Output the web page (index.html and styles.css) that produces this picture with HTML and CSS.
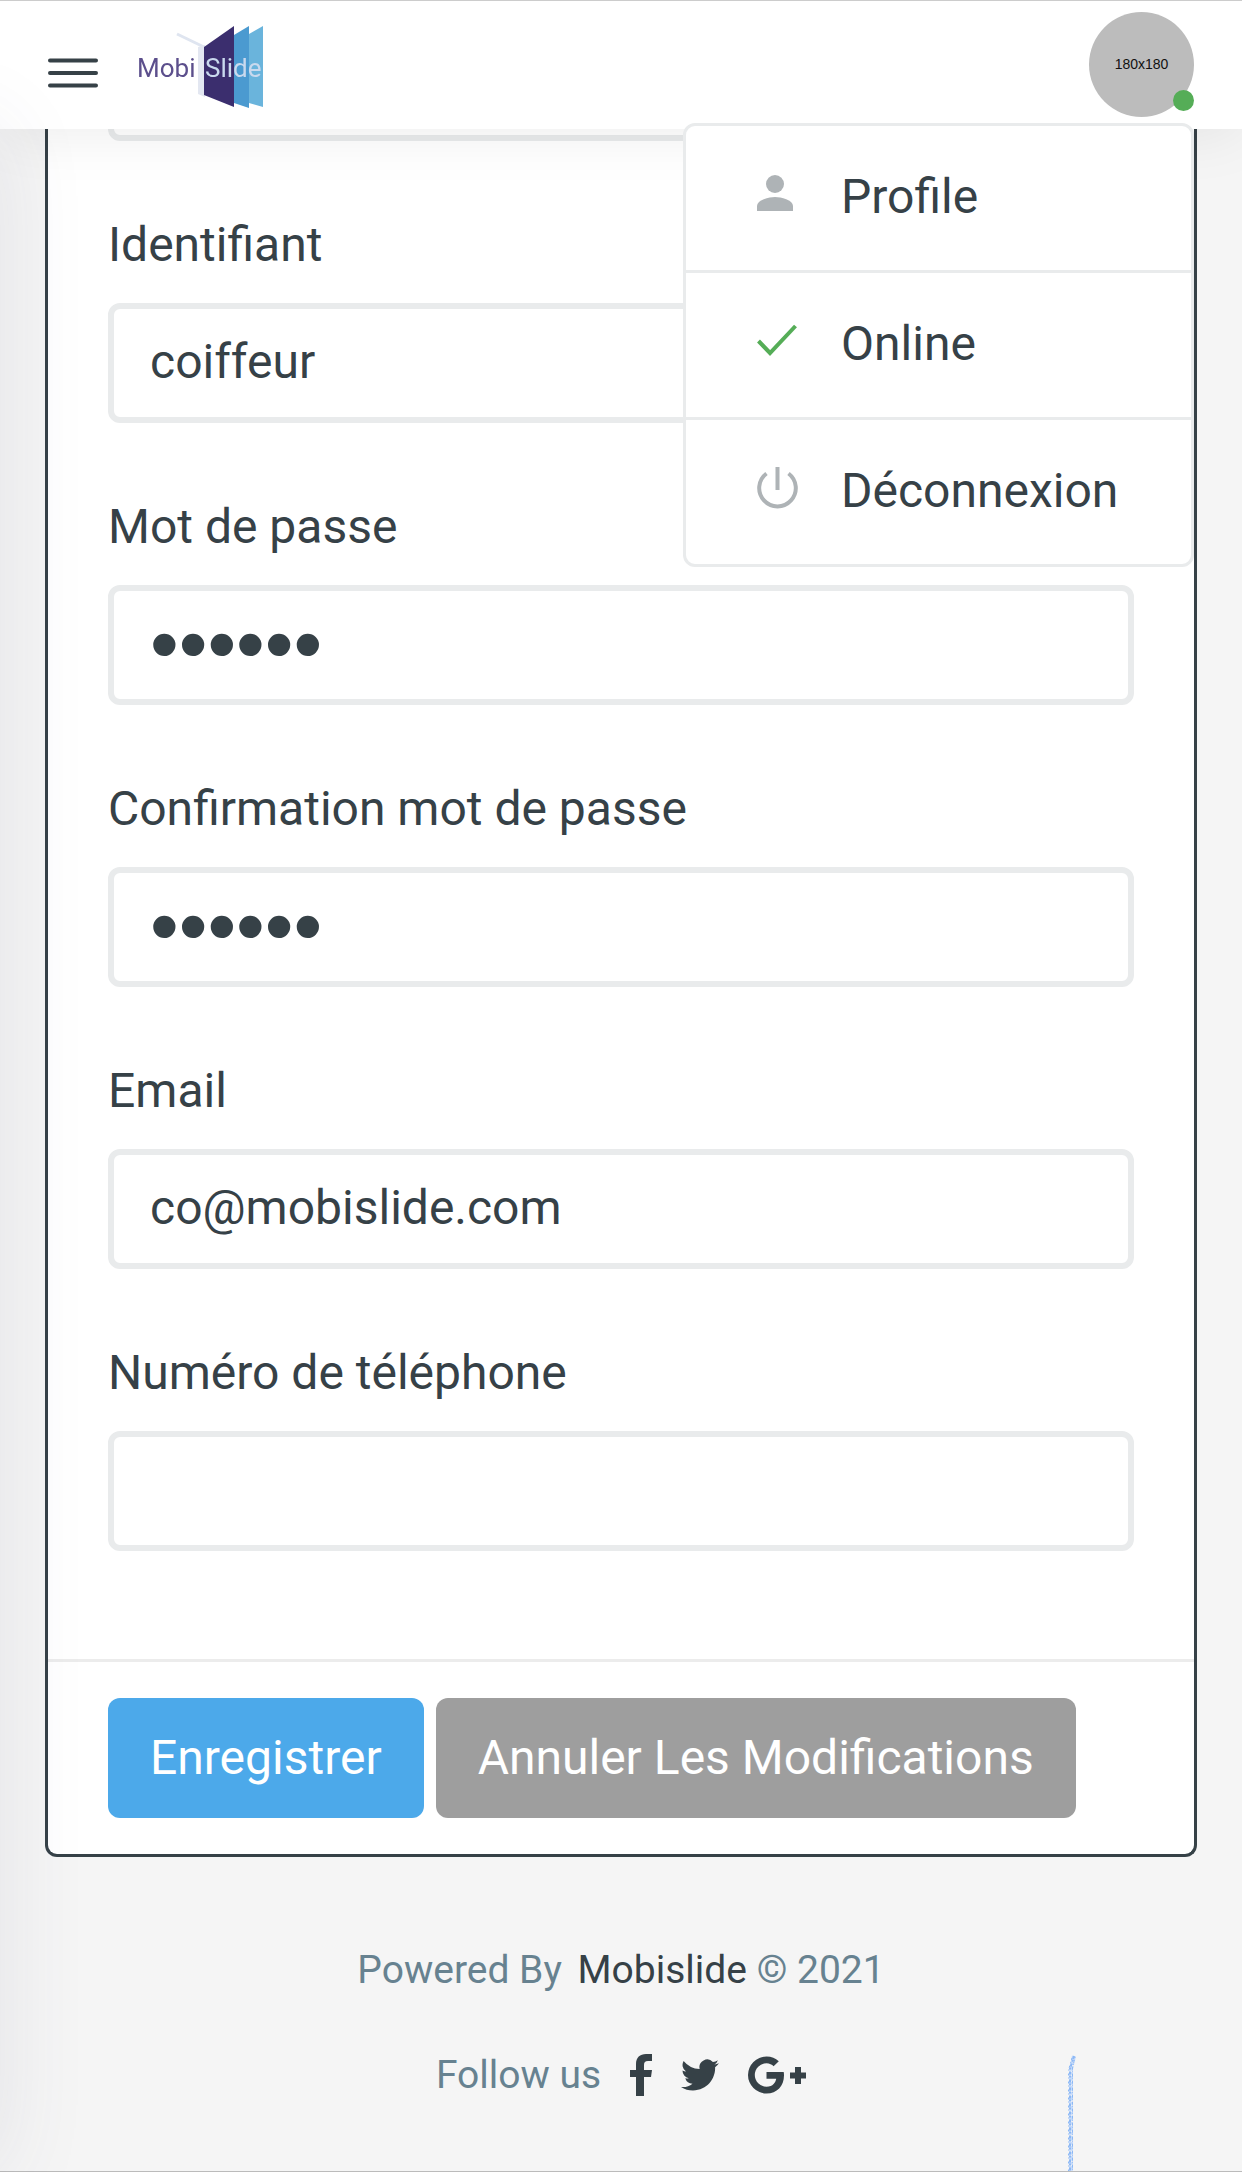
FILE: index.html
```html
<!DOCTYPE html>
<html lang="fr">
<head>
<meta charset="utf-8">
<meta name="viewport" content="width=device-width, initial-scale=1">
<title>Mobislide</title>
<link rel="stylesheet" href="styles.css">
</head>
<body>
<header class="topbar">
  <button class="menu-toggle" type="button" aria-label="Menu">
    <svg width="50" height="30" viewBox="0 0 50 30" aria-hidden="true"><path d="M2 2.500h46M2 15h46M2 27.500h46"/></svg>
  </button>
  <a class="logo" href="#" aria-label="Mobislide">
    <svg width="130" height="86" viewBox="0 0 130 86">
      <path class="logo-line" d="M40 11L67 24"/>
      <path class="logo-edge" d="M61 24l7-2v52l-7-3z"/>
      <path class="logo-dark" d="M67 24L97 3v81L67 72z"/>
      <path class="logo-mid" d="M97 12l15-9v82l-15-5z"/>
      <path class="logo-light" d="M112 11l14-8v81l-14-4z"/>
      <text class="logo-name" x="0" y="54">Mobi</text>
      <text class="logo-slide" x="68" y="54">Slide</text>
    </svg>
  </a>
  <button class="avatar" type="button" aria-label="Compte">180x180<span class="status"></span></button>
  <nav class="user-menu" aria-label="Compte">
    <a class="user-item" href="#">
      <svg class="user-icon" viewBox="0 0 42 42"><circle cx="18" cy="11" r="9"/><path d="M0 38v-5c0-6 12-9 18-9s18 3 18 9v5z"/></svg>
      Profile
    </a>
    <a class="user-item" href="#">
      <svg class="user-icon online" viewBox="0 0 42 42"><path d="M1.500 21L13 33 38.500 6"/></svg>
      Online
    </a>
    <a class="user-item" href="#">
      <svg class="user-icon power" viewBox="0 0 42 42"><path d="M20.500 0v23M9.500 6.500a18.300 18.300 0 1 0 22 0"/></svg>
      Déconnexion
    </a>
  </nav>
</header>
<aside class="drawer" aria-hidden="true"></aside>
<main class="content">
  <form class="card">
    <div class="fields">
      <div class="field"><input class="control" type="text" aria-label="Nom"></div>
      <div class="field"><label class="label" for="login">Identifiant</label><input class="control" id="login" type="text" value="coiffeur"></div>
      <div class="field"><label class="label" for="pass">Mot de passe</label><input class="control secret" id="pass" type="password" value="secret"></div>
      <div class="field"><label class="label" for="confirm">Confirmation mot de passe</label><input class="control secret" id="confirm" type="password" value="secret"></div>
      <div class="field"><label class="label" for="email">Email</label><input class="control" id="email" type="email" value="co@mobislide.com"></div>
      <div class="field"><label class="label" for="phone">Numéro de téléphone</label><input class="control" id="phone" type="tel"></div>
    </div>
    <div class="actions">
      <button class="btn primary" type="submit">Enregistrer</button>
      <button class="btn neutral" type="reset">Annuler Les Modifications</button>
    </div>
  </form>
</main>
<footer class="footer">
  <p class="credit">Powered By <a class="brand" href="#">Mobislide</a> © 2021</p>
  <div class="follow">
    <span>Follow us</span>
    <a class="social" href="#" aria-label="Facebook"><svg width="22" height="42" viewBox="0 0 22 42"><path d="M22 0v7h-4c-3 0-4 1.500-4 4v5h8l-1 7h-7v19H6V23H0v-7h6v-6C6 3.500 10 0 16 0z"/></svg></a>
    <a class="social" href="#" aria-label="Twitter"><svg width="38" height="38" viewBox="0 0 24 24"><path d="M23.950 4.570a10 10 0 0 1-2.820.770 4.960 4.960 0 0 0 2.160-2.720c-.950.550-2 .950-3.130 1.180a4.920 4.920 0 0 0-8.380 4.480A13.930 13.930 0 0 1 1.640 3.160a4.920 4.920 0 0 0 1.520 6.570 4.900 4.900 0 0 1-2.230-.610v.060a4.920 4.920 0 0 0 3.950 4.830 5 5 0 0 1-2.210.080 4.940 4.940 0 0 0 4.600 3.420A9.870 9.870 0 0 1 0 19.540a13.940 13.940 0 0 0 7.550 2.210c9.050 0 14-7.500 14-13.980 0-.210 0-.420-.020-.630a9.940 9.940 0 0 0 2.420-2.570z"/></svg></a>
    <a class="social" href="#" aria-label="Google Plus"><svg width="58" height="38" viewBox="0 0 58 38"><path d="M18.500 16h17.200c.200 1 .300 2 .300 3.200C36 30 29 37.500 18.500 37.500a18.500 18.500 0 1 1 0-37c5 0 9 1.800 12.300 4.800l-5.200 5C24 8.700 21.500 7.300 18.500 7.300a11.700 11.700 0 0 0 0 23.400c6.500 0 9.200-4.500 9.700-8h-9.700zM47 11h6v5.500h5v6h-5V28h-6v-5.500h-5v-6h5z"/></svg></a>
  </div>
  <svg class="chalk" width="12" height="116" viewBox="0 0 12 116" aria-hidden="true"><path class="chalk-base" d="M8 1L5 14V116"/><path class="chalk-a" d="M8 1L4 14V116"/><path class="chalk-b" d="M6 3L2.500 15V116"/><path class="chalk-c" d="M9 2L6.500 13V116"/></svg>
</footer>
</body>
</html>
```

FILE: styles.css
```css
* { box-sizing: border-box; }

body {
  margin: 0;
  min-height: 100vh;
  display: flex;
  flex-direction: column;
  overflow-x: hidden;
  background: #f5f5f5;
  color: #364147;
  font: 48px/72px Roboto, sans-serif;
}

a { color: inherit; text-decoration: none; }
button { border: 0; font: inherit; cursor: pointer; }
svg { display: block; }

/* Top bar */
.topbar {
  position: fixed;
  inset: 0 0 auto;
  z-index: 2;
  height: 129px;
  padding: 0 48px 2px;
  display: flex;
  align-items: center;
  gap: 39px;
  border-top: 1px solid #ccc;
  background: #fff;
  box-shadow: 0 3px 60px rgba(0, 0, 0, .08);
}
.menu-toggle { margin-top: 17px; padding: 0; background: none; }
.menu-toggle path { fill: none; stroke: #364147; stroke-width: 4; stroke-linecap: round; }

.logo { margin-top: 4px; }
.logo-line { fill: none; stroke: #dfe5f0; stroke-width: 3; }
.logo-edge { fill: #e3e7f1; }
.logo-dark { fill: #3b2e6e; }
.logo-mid { fill: #4b9ad0; }
.logo-light { fill: #6ab4dc; }
.logo-name, .logo-slide { font-size: 26px; }
.logo-name { fill: #5c4f8c; }
.logo-slide { fill: #c9d9ee; }

.avatar {
  position: relative;
  width: 105px;
  height: 105px;
  margin-left: auto;
  padding: 0;
  border-radius: 50%;
  background: #bcbcbc;
  color: #111;
  font: 14px/20px "Liberation Sans", sans-serif;
}
.status {
  position: absolute;
  right: 0;
  bottom: 6px;
  width: 21px;
  height: 21px;
  border-radius: 50%;
  background: #55ad57;
}

.user-menu {
  position: absolute;
  top: 122px;
  right: 48px;
  width: 511px;
  border: 3px solid #e9ebec;
  border-radius: 12px;
  background: #fff;
}
.user-item {
  display: flex;
  align-items: center;
  gap: 42px;
  height: 144px;
  padding: 0 71px 2px;
}
.user-item + .user-item { height: 147px; border-top: 3px solid #e9ebec; }
.user-icon { width: 42px; height: 42px; margin-bottom: 6px; fill: #aeb3b6; }
.online { fill: none; stroke: #55ad57; stroke-width: 4; }
.power { fill: none; stroke: #aeb3b6; stroke-width: 4; }

/* Closed side drawer: only its shadow reaches the page */
.drawer {
  position: fixed;
  top: 129px;
  bottom: 0;
  left: -780px;
  z-index: 3;
  width: 780px;
  box-shadow: 0 0 84px rgba(64, 64, 110, .1);
  pointer-events: none;
}

/* Form card */
.content { padding: 0 45px; }
.card {
  border: 3px solid #364147;
  border-top: 0;
  border-radius: 0 0 12px 12px;
  background: #fff;
}
.fields {
  display: flex;
  flex-direction: column;
  gap: 68px;
  padding: 21px 60px 108px;
}
.field { display: flex; flex-direction: column; gap: 22px; }
.control {
  width: 100%;
  height: 120px;
  padding: 0 36px 3px;
  border: 6px solid #e9ebec;
  border-radius: 12px;
  background: transparent;
  color: inherit;
  font: inherit;
}
.secret { font-family: "Liberation Sans", sans-serif; font-size: 82px; }
.actions {
  display: flex;
  flex-wrap: wrap;
  gap: 12px;
  padding: 36px 60px;
  border-top: 3px solid #ececec;
}
.btn { height: 120px; padding: 0 42px; border-radius: 12px; color: #fff; }
.primary { background: #4ca9ea; }
.neutral { background: #9e9e9e; }

/* Footer */
.footer {
  position: relative;
  flex: 1;
  display: flex;
  flex-direction: column;
  align-items: center;
  gap: 45px;
  padding-top: 83px;
  border-bottom: 1px solid #bbb;
  color: #678290;
  font-size: 39px;
  line-height: 60px;
}
.credit { margin: 0; }
.brand { margin-left: 6px; color: #364147; }
.follow { display: flex; align-items: center; gap: 29px; }
.social { fill: #364147; }
.chalk { position: absolute; right: 164px; bottom: 0; fill: none; stroke: #8cb8f5; }
.chalk-base { stroke: #c5dafa; stroke-width: 4; stroke-dasharray: 5 1 3 1; }
.chalk-a { stroke-width: 2; stroke-dasharray: 3 1 2 2; }
.chalk-b { stroke-width: 1; stroke-dasharray: 2 2 1 3; }
.chalk-c { stroke-width: 1; stroke-dasharray: 1 2 3 1; }
```
